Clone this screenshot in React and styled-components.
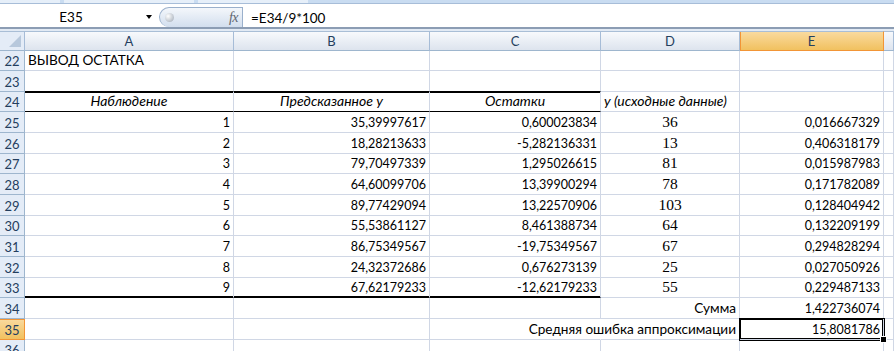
import React from 'react'
import styled, { createGlobalStyle, css } from 'styled-components'

/***************************************
  GLOBAL
***************************************/

const GlobalStyle = createGlobalStyle`
  html, body {
    margin: 0;
    padding: 0;
    background: #FFFFFF;
  }
  body {
    font-family: Lato, "Liberation Sans", sans-serif;
    font-size: 12.5px;
    color: #000000;
  }
`

const COLUMNS = '25px 209px 196px 171px 139px 144px 1fr'
const GRID = '#D0D7E5'
const HEAD_LINE = '#9EB6CE'

/***************************************
  FORMULA BAR
***************************************/

const Window = styled.div`
  width: 894px;
  height: 351px;
  overflow: hidden;
`

const RibbonEdge = styled.div`
  display: flex;
  gap: 4px;
  height: 3px;
  background: #C9DCF1;
  border-bottom: 1px solid #A7BDD8;
`

const RibbonTab = styled.div`
  width: ${p => p.$w}px;
  background: #E6EFF9;
`

const Bar = styled.div`
  display: flex;
  height: 23px;
  background: #FFFFFF;
  border-bottom: 2px solid #8C9DB4;
`

const NameBox = styled.div`
  width: 159px;
  display: flex;
  align-items: center;
  padding-top: 2px;
  box-sizing: border-box;
`

const NameText = styled.div`
  width: 142px;
  text-align: center;
  font-size: 13.5px;
`

const DropArrow = styled.div`
  width: 0;
  height: 0;
  border-left: 3.5px solid transparent;
  border-right: 3.5px solid transparent;
  border-top: 4px solid #000000;
  margin-left: 4px;
`

const FxPill = styled.div`
  width: 84px;
  flex-shrink: 0;
  margin-top: 3px;
  box-sizing: border-box;
  border: 1px solid #9AB0CC;
  border-bottom: none;
  border-radius: 10px 0 0 10px;
  background: linear-gradient(#F4F7FB, #D2DEEE);
  display: flex;
  align-items: center;
  justify-content: space-between;
  padding: 0 4px 0 5px;
`

const Knob = styled.div`
  width: 9px;
  height: 9px;
  border-radius: 50%;
  background: radial-gradient(circle at 35% 35%, #FFFFFF, #B9C0C9 70%, #9AA3AE);
`

const FxMark = styled.span`
  font-family: "Liberation Serif", serif;
  font-style: italic;
  font-size: 14px;
  color: #5F6670;
  letter-spacing: -0.5px;
`

const FormulaText = styled.div`
  flex: 1;
  display: flex;
  align-items: center;
  padding: 2px 0 0 8px;
  font-size: 13.5px;
  margin-top: 3px;
`

const BarGap = styled.div`
  height: 2px;
  background: #E2EAF4;
`

/***************************************
  SHEET
***************************************/

const Sheet = styled.div`
  display: grid;
  grid-template-columns: ${COLUMNS};
  grid-template-rows: 19.5px;
  grid-auto-rows: 20.67px;
`

const ColHead = styled.div`
  box-sizing: border-box;
  display: flex;
  align-items: center;
  justify-content: center;
  padding-top: 1px;
  color: #243E5E;
  font-size: 13px;
  border-top: 1px solid #A9BED6;
  border-right: 1px solid #A6BCD7;
  border-bottom: 1px solid ${HEAD_LINE};
  background: linear-gradient(#F7F9FC, #DDE4EE);
  ${p => p.$active && css`
    background: linear-gradient(#F9DA9F, #F1C15F);
    border-right-color: #F29536;
    border-bottom-color: #F29536;
    box-shadow: inset 1px 0 0 #F29536;
  `}
`

const Corner = styled(ColHead)`
  position: relative;
  background: #E4ECF7;
  &::after {
    content: '';
    position: absolute;
    right: 3px;
    bottom: 3px;
    border-left: 12px solid transparent;
    border-bottom: 12px solid #B7C8DC;
  }
`

const RowHead = styled.div`
  box-sizing: border-box;
  display: flex;
  align-items: flex-end;
  justify-content: center;
  padding-bottom: 1px;
  color: #243E5E;
  font-size: 13px;
  background: #E4ECF7;
  border-right: 1px solid ${HEAD_LINE};
  border-bottom: 1px solid ${HEAD_LINE};
  ${p => p.$active && css`
    background: linear-gradient(#F9DA9F, #F1C15F);
    border-right-color: #F29536;
    border-bottom-color: #F29536;
    box-shadow: inset 0 1px 0 #F29536;
  `}
`

const Cell = styled.div`
  position: relative;
  box-sizing: border-box;
  display: flex;
  align-items: flex-end;
  justify-content: ${p => p.$align === 'right' ? 'flex-end' : p.$align === 'center' ? 'center' : 'flex-start'};
  padding: 0 3px 2px 3px;
  white-space: nowrap;
  border-right: 1px solid ${p => p.$noRight ? '#FFFFFF' : GRID};
  border-bottom: 1px solid ${p => p.$line ? '#000000' : GRID};
  ${p => p.$label && css`font-size: 13.6px;`}
  ${p => p.$italic && css`font-style: italic; font-size: 14px;`}
  ${p => p.$serif && css`
    font-family: "Liberation Serif", serif;
    font-size: 15.5px;
    padding-bottom: 1px;
  `}
  ${p => p.$thickTop && css`box-shadow: inset 0 1px 0 #000000;`}
  ${p => p.$thickBottom && css`box-shadow: inset 0 -1px 0 #000000;`}
  ${p => p.$selected && css`
    box-shadow: 0 0 0 1px #000000, inset 0 0 0 1px #000000;
    z-index: 1;
    &::after {
      content: '';
      position: absolute;
      right: -4px;
      bottom: -4px;
      width: 5px;
      height: 5px;
      background: #000000;
      border: 1px solid #FFFFFF;
    }
  `}
`

/***************************************
  DATA
***************************************/

const residuals = [
  ['1', '35,39997617', '0,600023834', '36', '0,016667329'],
  ['2', '18,28213633', '-5,282136331', '13', '0,406318179'],
  ['3', '79,70497339', '1,295026615', '81', '0,015987983'],
  ['4', '64,60099706', '13,39900294', '78', '0,171782089'],
  ['5', '89,77429094', '13,22570906', '103', '0,128404942'],
  ['6', '55,53861127', '8,461388734', '64', '0,132209199'],
  ['7', '86,75349567', '-19,75349567', '67', '0,294828294'],
  ['8', '24,32372686', '0,676273139', '25', '0,027050926'],
  ['9', '67,62179233', '-12,62179233', '55', '0,229487133'],
]

const blank = () => [{}, {}, {}, {}, {}]

const buildRows = () => {
  const rows = []
  rows.push({ n: 22, cells: [{ t: 'ВЫВОД ОСТАТКА', label: true }, {}, {}, {}, {}] })
  rows.push({ n: 23, cells: [{ line: true }, { line: true }, { line: true }, {}, {}] })
  rows.push({
    n: 24,
    cells: [
      { t: 'Наблюдение', align: 'center', italic: true, thickTop: true, line: true },
      { t: 'Предсказанное у', align: 'center', italic: true, thickTop: true, line: true },
      { t: 'Остатки', align: 'center', italic: true, thickTop: true, line: true },
      { t: 'у (исходные данные)', italic: true },
      {},
    ],
  })
  residuals.forEach((r, i) => {
    const last = i === residuals.length - 1
    rows.push({
      n: 25 + i,
      cells: [
        { t: r[0], align: 'right', line: last, thickBottom: last },
        { t: r[1], align: 'right', line: last, thickBottom: last },
        { t: r[2], align: 'right', line: last, thickBottom: last },
        { t: r[3], align: 'center', serif: true },
        { t: r[4], align: 'right' },
      ],
    })
  })
  rows.push({
    n: 34,
    cells: [{}, {}, {}, { t: 'Сумма', align: 'right', label: true }, { t: '1,422736074', align: 'right' }],
  })
  rows.push({
    n: 35,
    active: true,
    cells: [
      {},
      {},
      { noRight: true },
      { t: 'Средняя ошибка аппроксимации', align: 'right', label: true },
      { t: '15,8081786', align: 'right', selected: true },
    ],
  })
  rows.push({ n: 36, cells: blank() })
  return rows
}

const ROWS = buildRows()

/***************************************
  MAIN
***************************************/

const App = () => {
  return (
    <Window>
      <GlobalStyle />
      <RibbonEdge>
        <RibbonTab $w={60} />
        <RibbonTab $w={130} />
        <RibbonTab $w={110} />
      </RibbonEdge>
      <Bar>
        <NameBox>
          <NameText>E35</NameText>
          <DropArrow />
        </NameBox>
        <FxPill>
          <Knob />
          <FxMark>fx</FxMark>
        </FxPill>
        <FormulaText>=E34/9*100</FormulaText>
      </Bar>
      <BarGap />
      <Sheet>
        <Corner />
        {['A', 'B', 'C', 'D', 'E', ''].map((c) => (
          <ColHead key={c || 'F'} $active={c === 'E'}>{c}</ColHead>
        ))}
        {ROWS.map((row) => (
          <React.Fragment key={row.n}>
            <RowHead $active={row.active}>{row.n}</RowHead>
            {row.cells.map((c, i) => (
              <Cell
                key={i}
                $align={c.align}
                $label={c.label}
                $italic={c.italic}
                $serif={c.serif}
                $line={c.line}
                $thickTop={c.thickTop}
                $thickBottom={c.thickBottom}
                $noRight={c.noRight}
                $selected={c.selected}
              >
                {c.t}
              </Cell>
            ))}
            <Cell />
          </React.Fragment>
        ))}
      </Sheet>
    </Window>
  )
}

/**************************************/

export default App
